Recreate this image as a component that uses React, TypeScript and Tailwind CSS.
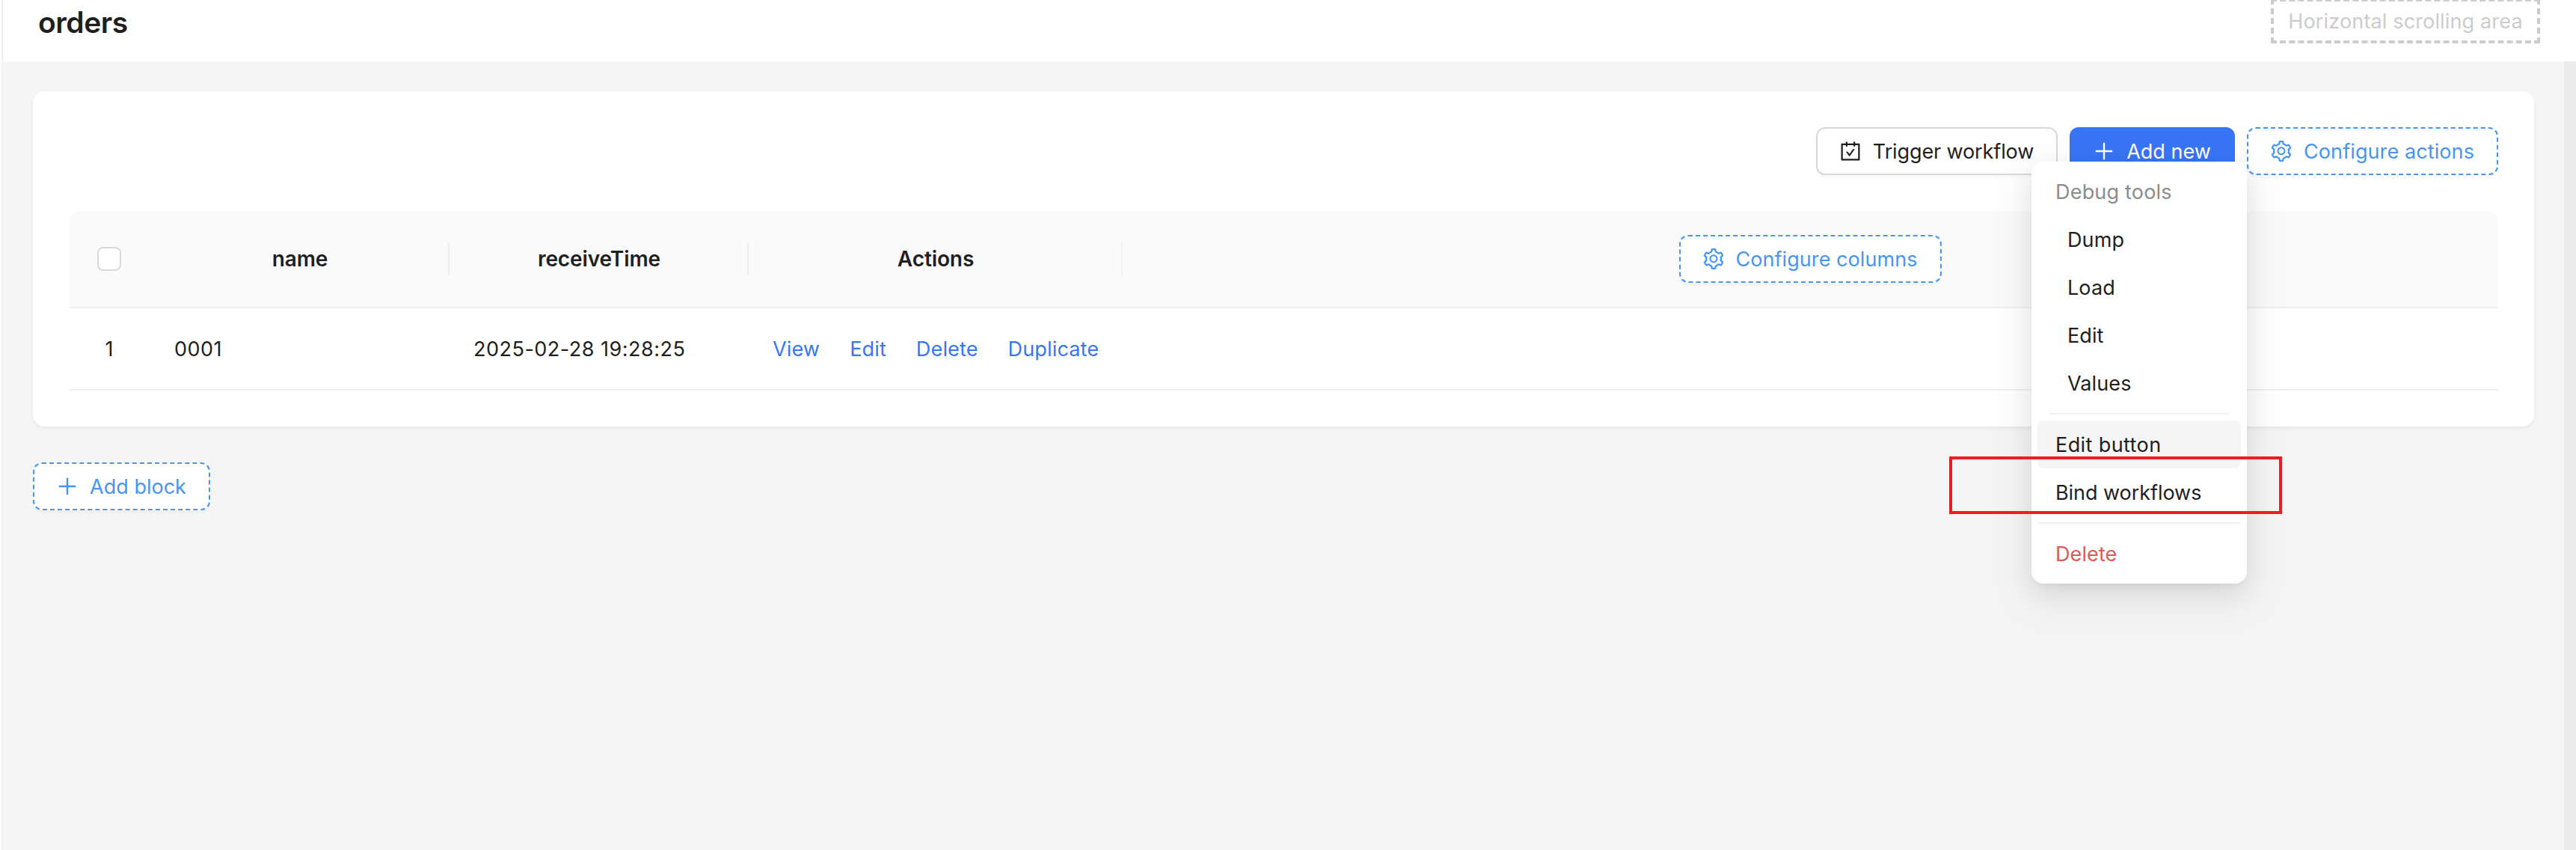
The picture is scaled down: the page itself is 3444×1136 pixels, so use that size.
import type { ReactNode } from "react";
import { AiOutlineCarryOut, AiOutlineSetting } from "react-icons/ai";

const ICON_BOX = "64 64 896 896";

function PlusIcon() {
  return (
    <svg viewBox={ICON_BOX} className="size-7 shrink-0" fill="currentColor">
      <path d="M482 152h60q8 0 8 8v704q0 8-8 8h-60q-8 0-8-8V160q0-8 8-8z" />
      <path d="M160 474h704q8 0 8 8v60q0 8-8 8H160q-8 0-8-8v-60q0-8 8-8z" />
    </svg>
  );
}

function DesignerButton({ icon, label, className }: { icon: ReactNode; label: string; className: string }) {
  return (
    <button
      className={`flex h-16 items-center justify-center gap-4 whitespace-nowrap rounded-xl border-2 border-dashed border-[#4895ef] bg-white text-[#4895ef] shadow-[0_4px_0_rgba(0,0,0,0.02)] ${className}`}
    >
      {icon}
      <span className="mt-[2px]">{label}</span>
    </button>
  );
}

function HeaderCell({ label }: { label: string }) {
  return (
    <div className="flex items-center">
      <span className="flex-1 pl-1 text-center text-[28px] font-semibold tracking-[-0.1px]">{label}</span>
      <span className="h-11 w-[2px] shrink-0 translate-x-[1px] bg-[#f0f0f0]" />
    </div>
  );
}

function MenuItem({ label, className = "pl-4" }: { label: string; className?: string }) {
  return <div className={`flex h-16 items-center rounded-lg pt-[2px] ${className}`}>{label}</div>;
}

const COLUMNS = "grid grid-cols-[108px_400px_400px_500px_1fr]";

export default function App() {
  return (
    <div className="relative h-[1136px] w-[3444px] overflow-hidden bg-white pl-[2px] font-['Inter',sans-serif] text-[27px] leading-[44px] text-[#1f1f1f]">
      <div className="flex h-full flex-col border-l-2 border-[#f0f0f0]">
        <header className="flex h-[82px] shrink-0 items-start justify-between bg-white pl-[47px] pr-12">
          <h1 className="mt-[2px] text-[39px] font-semibold leading-[56px] tracking-[-0.5px]">orders</h1>
          <div className="-mt-[2px] flex h-[60px] w-[360px] items-center justify-center border-4 border-dashed border-[#cccccc] pt-[2px] tracking-[0.15px] text-[#cccccc]">
            Horizontal scrolling area
          </div>
        </header>

        <div className="flex flex-1">
          <main className="flex flex-1 flex-col items-start bg-[#f5f5f5] px-10 pt-10">
            <section className="h-[448px] w-full rounded-2xl bg-white px-12 pt-12 shadow-[0_2px_4px_rgba(0,0,0,0.03),0_2px_12px_-2px_rgba(0,0,0,0.02),0_4px_8px_rgba(0,0,0,0.02)]">
              <div className="flex justify-end gap-4">
                <button className="flex h-16 w-[323px] items-center justify-center gap-4 whitespace-nowrap rounded-xl border-2 border-[#d9d9d9] bg-white shadow-[0_4px_0_rgba(0,0,0,0.02)]">
                  <AiOutlineCarryOut viewBox={ICON_BOX} className="size-7 shrink-0" />
                  <span className="mt-[2px] tracking-[-0.12px]">Trigger workflow</span>
                </button>
                <button className="flex h-16 w-[221px] items-center justify-center gap-4 whitespace-nowrap rounded-xl bg-[#3875f6] text-white">
                  <PlusIcon />
                  <span className="mt-[2px]">Add new</span>
                </button>
                <DesignerButton
                  icon={<AiOutlineSetting viewBox={ICON_BOX} className="size-7 shrink-0" />}
                  label="Configure actions"
                  className="w-[336px] tracking-[0.1px]"
                />
              </div>

              <div className="mt-12">
                <div className={`${COLUMNS} h-[130px] rounded-t-2xl border-b-2 border-[#f0f0f0] bg-[#fafafa]`}>
                  <div className="flex items-center justify-center">
                    <span className="size-8 rounded-lg border-2 border-[#d9d9d9] bg-white" />
                  </div>
                  <HeaderCell label="name" />
                  <HeaderCell label="receiveTime" />
                  <HeaderCell label="Actions" />
                  <div className="flex items-center justify-center">
                    <DesignerButton
                      icon={<AiOutlineSetting viewBox={ICON_BOX} className="size-7 shrink-0" />}
                      label="Configure columns"
                      className="w-[351px] tracking-[0.06px]"
                    />
                  </div>
                </div>
                <div className={`${COLUMNS} h-[110px] items-center border-b-2 border-[#f0f0f0] pt-[2px]`}>
                  <div className="text-center">1</div>
                  <div className="pl-[33px] tracking-[0.5px]">0001</div>
                  <div className="pl-[33px] tracking-[0.5px]">2025-02-28 19:28:25</div>
                  <div className="flex gap-10 pl-[33px] tracking-[0.15px] text-[#3875f6]">
                    <a>View</a>
                    <a>Edit</a>
                    <a>Delete</a>
                    <a>Duplicate</a>
                  </div>
                </div>
              </div>
            </section>

            <div className="mt-12">
              <DesignerButton icon={<PlusIcon />} label="Add block" className="w-[237px]" />
            </div>
          </main>
          <div className="w-4 bg-[#ebebeb]" />
        </div>
      </div>

      <div className="absolute left-[2716px] top-[216px] w-[288px] rounded-2xl bg-white p-2 tracking-[0.1px] shadow-[0_12px_32px_0_rgba(0,0,0,0.08),0_6px_12px_-8px_rgba(0,0,0,0.12),0_18px_56px_16px_rgba(0,0,0,0.05)]">
        <div className="flex h-16 items-center pl-6 pt-[2px] tracking-[0.2px] text-[#8c8c8c]">Debug tools</div>
        <div className="px-4">
          <MenuItem label="Dump" className="pl-6" />
          <MenuItem label="Load" className="pl-6" />
          <MenuItem label="Edit" className="pl-6" />
          <MenuItem label="Values" className="pl-6" />
          <div className="my-2 h-[2px] bg-[#f0f0f0]" />
        </div>
        <MenuItem label="Edit button" className="bg-[#f5f5f5] pl-6 tracking-[0.4px]" />
        <MenuItem label="Bind workflows" className="pl-6 tracking-[-0.05px]" />
        <div className="my-2 h-[2px] bg-[#f0f0f0]" />
        <MenuItem label="Delete" className="pl-6 text-[#db5b55]" />
      </div>

      <div className="absolute left-[2606px] top-[610px] h-[77px] w-[445px] border-4 border-[#ee1c24]" />
    </div>
  );
}
